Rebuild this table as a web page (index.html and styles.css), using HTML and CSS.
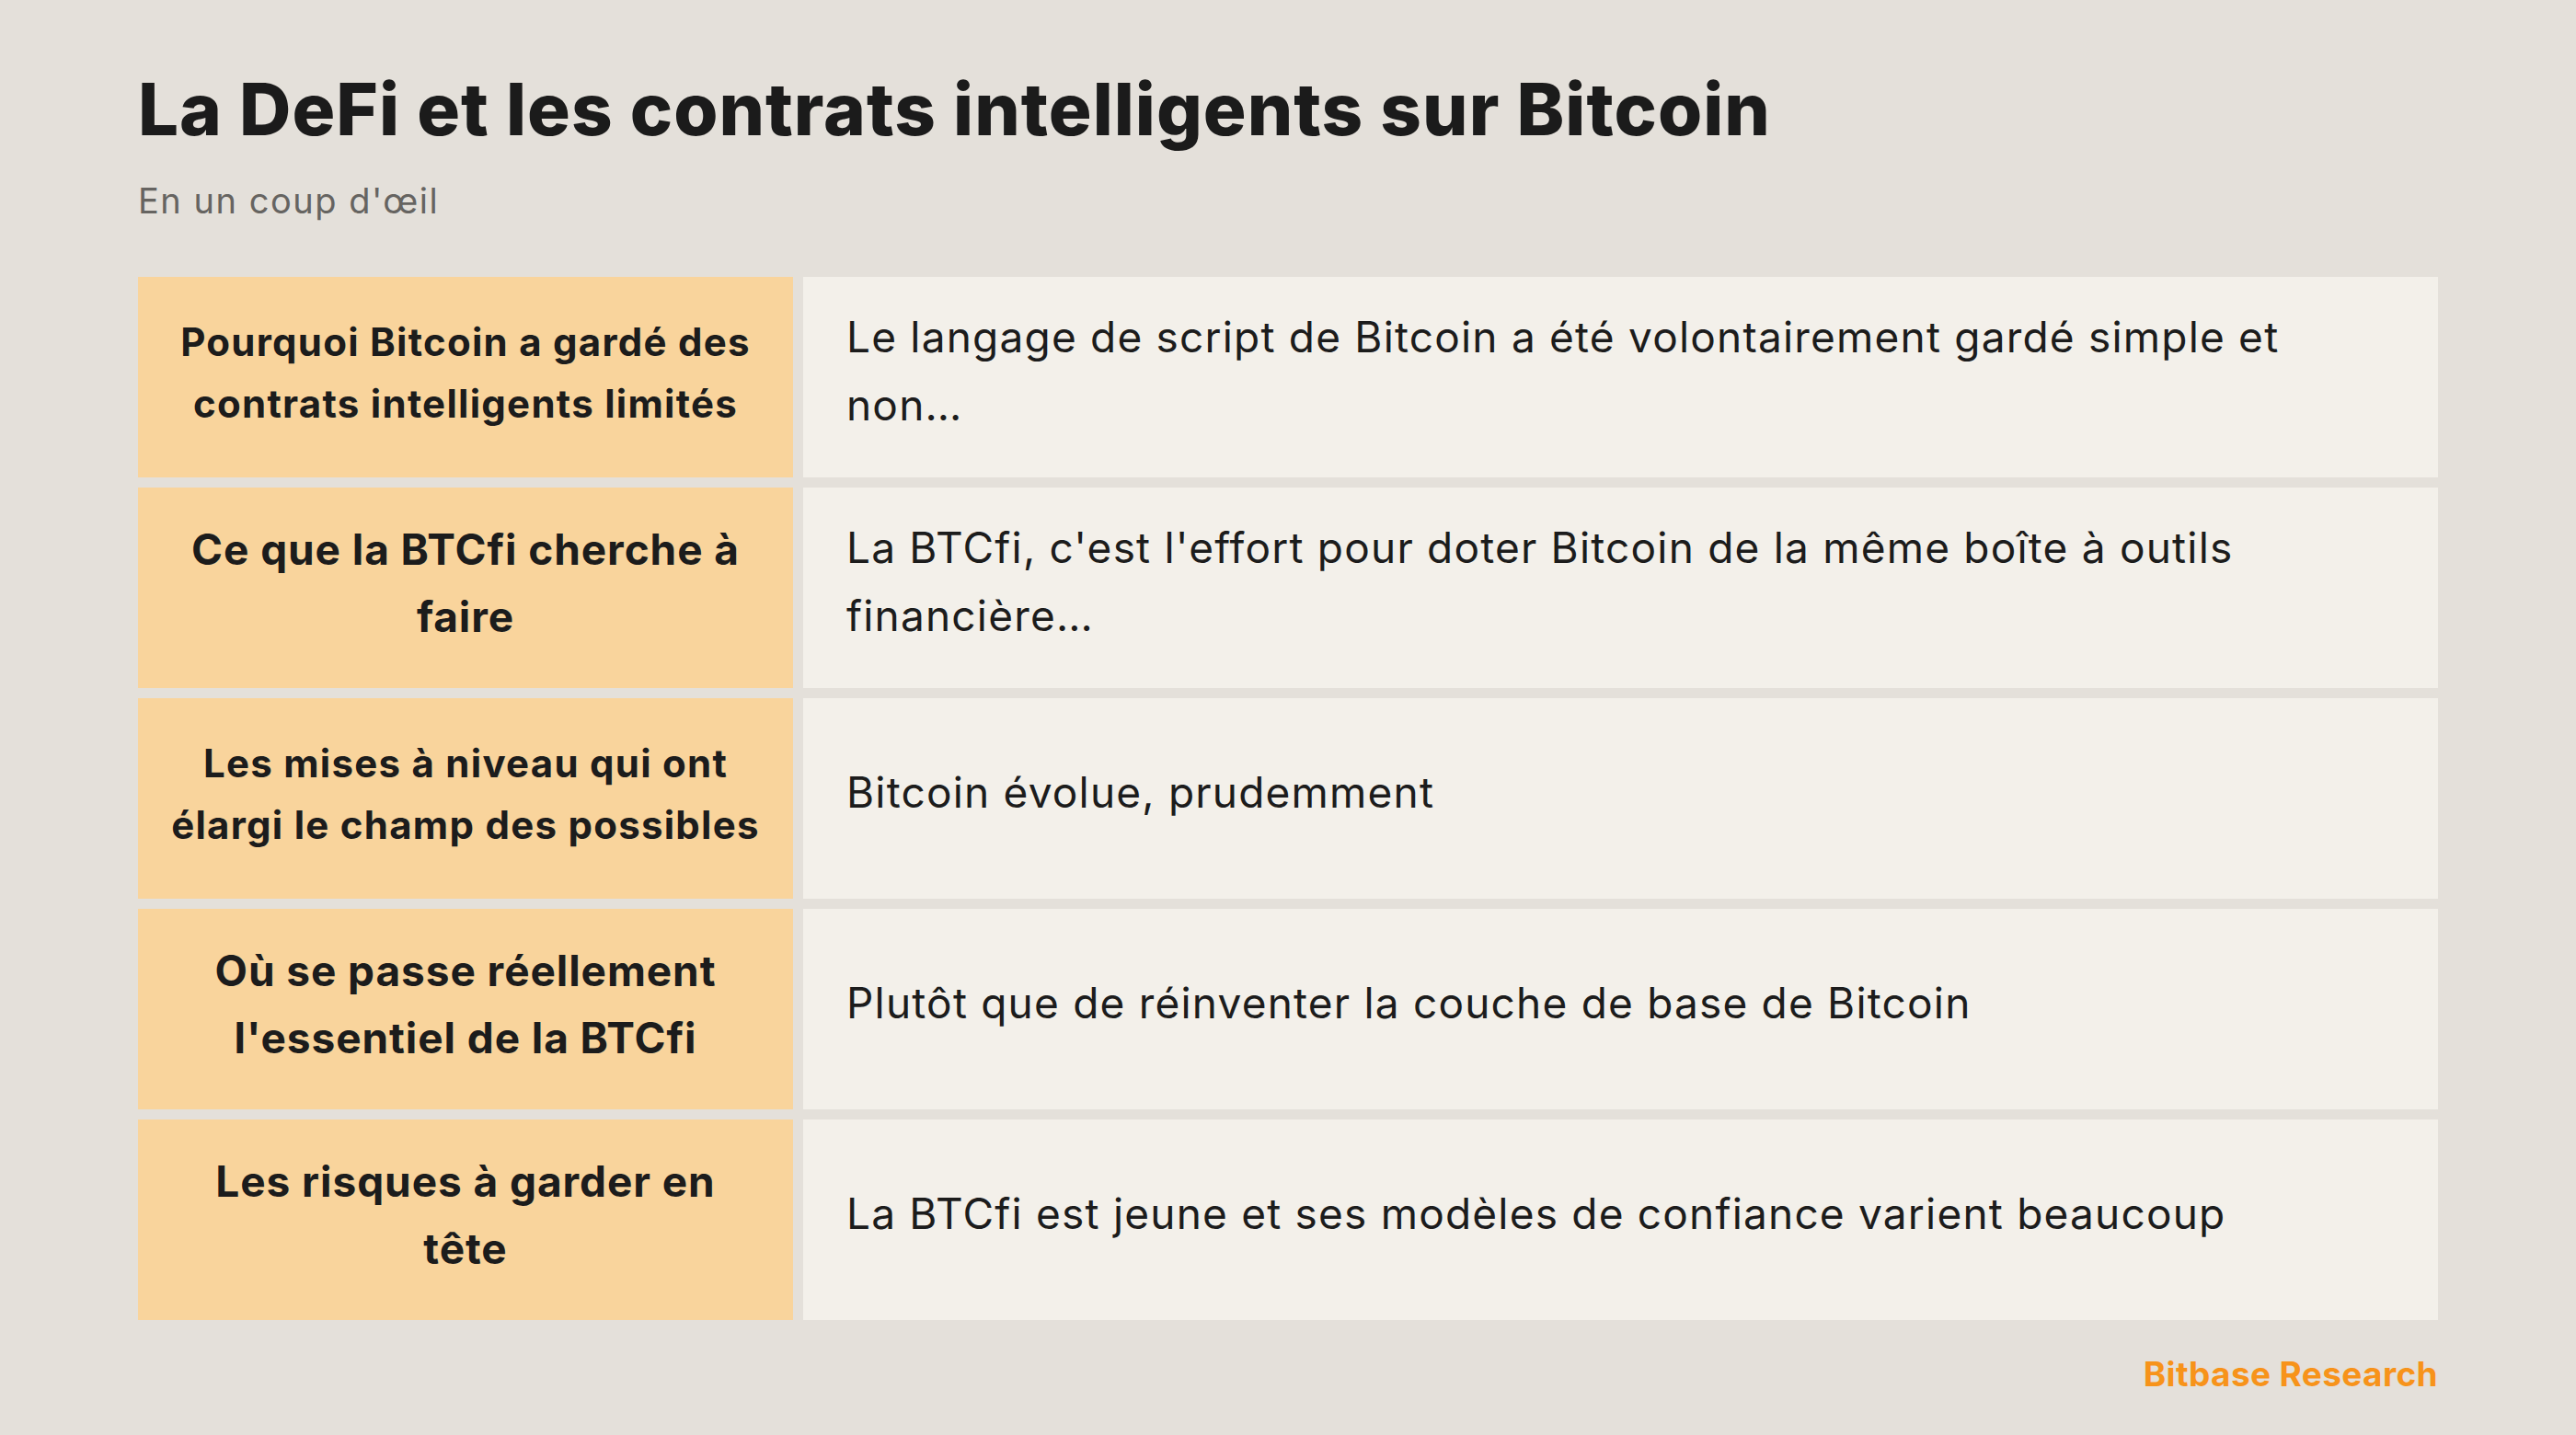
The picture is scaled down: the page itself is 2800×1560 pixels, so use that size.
FILE: index.html
```html
<!DOCTYPE html>
<html lang="fr">
<head>
<meta charset="utf-8">
<title>La DeFi et les contrats intelligents sur Bitcoin</title>
<link rel="stylesheet" href="styles.css">
</head>
<body>
<main class="page">
  <header class="head">
    <h1 class="title">La DeFi et les contrats intelligents sur Bitcoin</h1>
    <p class="subtitle">En un coup d'œil</p>
  </header>
  <section class="table">
    <div class="label sm">Pourquoi Bitcoin a gardé des contrats intelligents limités</div>
    <div class="value">Le langage de script de Bitcoin a été volontairement gardé simple et non…</div>
    <div class="label">Ce que la BTCfi cherche à faire</div>
    <div class="value">La BTCfi, c'est l'effort pour doter Bitcoin de la même boîte à outils financière…</div>
    <div class="label sm">Les mises à niveau qui ont élargi le champ des possibles</div>
    <div class="value">Bitcoin évolue, prudemment</div>
    <div class="label">Où se passe réellement l'essentiel de la BTCfi</div>
    <div class="value">Plutôt que de réinventer la couche de base de Bitcoin</div>
    <div class="label">Les risques à garder en tête</div>
    <div class="value">La BTCfi est jeune et ses modèles de confiance varient beaucoup</div>
  </section>
  <footer class="foot">Bitbase Research</footer>
</main>
</body>
</html>
```

FILE: styles.css
```css
html, body {
  margin: 0;
  padding: 0;
}
body {
  background: #e4e0da;
  width: 2800px;
  height: 1560px;
  font-family: "Inter", "Open Sans", sans-serif;
  color: #1c1c1c;
}
.page {
  padding: 0 150px;
  display: flex;
  flex-direction: column;
}
.head {
  padding-top: 72px;
}
.title {
  margin: 0;
  font-size: 78px;
  line-height: 94px;
  font-weight: 800;
  letter-spacing: 0.013em;
  color: #1b1b1b;
}
.subtitle {
  margin: 28px 0 0;
  font-size: 38px;
  line-height: 48px;
  font-weight: 400;
  color: #666461;
  letter-spacing: 0.04em;
}
.table {
  margin-top: 59px;
  display: grid;
  grid-template-columns: 712px 1fr;
  grid-auto-rows: 218px;
  column-gap: 11px;
  row-gap: 11px;
}
.label {
  background: #f9d49c;
  display: flex;
  align-items: center;
  justify-content: center;
  text-align: center;
  padding: 0 44px 10px;
  font-size: 46px;
  line-height: 73px;
  font-weight: 700;
  letter-spacing: 0.02em;
}
.label.sm {
  padding: 0 30px 10px;
  font-size: 42px;
  line-height: 67px;
  letter-spacing: 0.03em;
}
.value {
  background: #f3f0ea;
  display: flex;
  align-items: center;
  padding: 0 100px 14px 47px;
  font-size: 46px;
  line-height: 74px;
  font-weight: 400;
  letter-spacing: 0.026em;
}
.foot {
  align-self: flex-end;
  margin-top: 35px;
  font-size: 37px;
  line-height: 48px;
  font-weight: 700;
  color: #f7931a;
  letter-spacing: 0.01em;
}
```
